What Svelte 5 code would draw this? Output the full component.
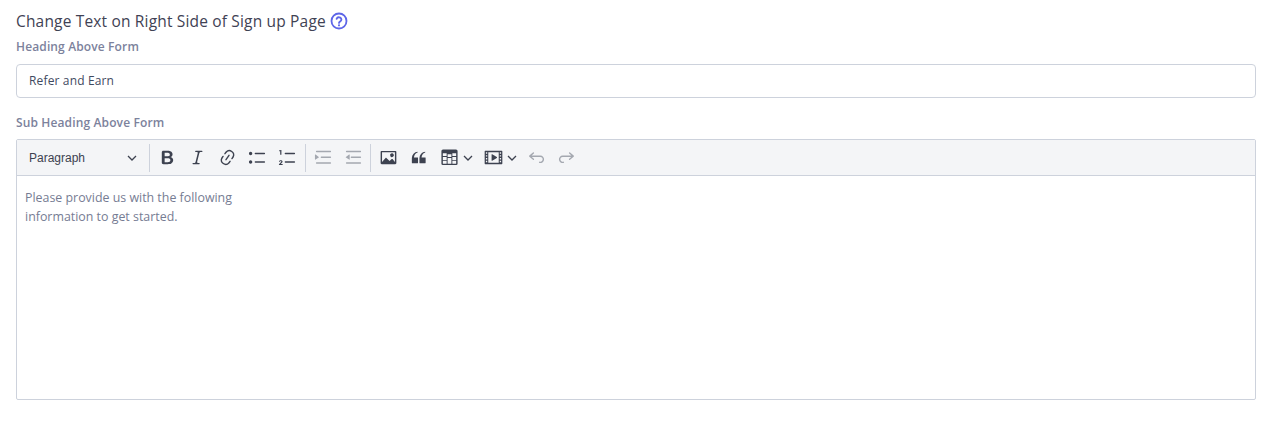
<script>
  const icons = {
    bold: 'M10.187 17H5.773c-.637 0-1.092-.138-1.364-.415-.273-.277-.409-.718-.409-1.323V4.738c0-.617.14-1.062.419-1.332.279-.27.73-.406 1.354-.406h4.68c.69 0 1.288.041 1.793.124.506.083.96.242 1.36.478.341.197.644.447.906.75a3.262 3.262 0 0 1 .808 2.162c0 1.401-.722 2.426-2.167 3.075C15.05 10.175 16 11.315 16 13.01a3.756 3.756 0 0 1-2.296 3.504 6.1 6.1 0 0 1-1.517.377c-.571.073-1.238.11-2 .11zm-.217-6.217H7v4.087h3.069c1.977 0 2.965-.69 2.965-2.072 0-.707-.256-1.22-.768-1.537-.512-.319-1.277-.478-2.296-.478zM7 5.13v3.619h2.606c.729 0 1.292-.067 1.69-.2a1.6 1.6 0 0 0 .91-.765c.165-.267.247-.566.247-.897 0-.707-.26-1.176-.778-1.409-.519-.232-1.31-.348-2.375-.348H7z',
    italic: 'm9.586 14.633.021.004c-.036.335.095.655.393.962.082.083.173.15.274.201h1.474a.6.6 0 1 1 0 1.2H5.304a.6.6 0 0 1 0-1.2h1.15c.474-.07.809-.182 1.005-.334.157-.122.291-.32.404-.597l2.416-9.55a1.053 1.053 0 0 0-.281-.823 1.12 1.12 0 0 0-.442-.296H8.15a.6.6 0 0 1 0-1.2h6.443a.6.6 0 1 1 0 1.2h-1.195c-.376.056-.65.155-.823.296-.215.175-.423.439-.623.79l-2.366 9.347z',
    link: 'm11.077 15 .991-1.416a.75.75 0 1 1 1.229.86l-1.148 1.64a.748.748 0 0 1-.217.206 5.251 5.251 0 0 1-8.503-5.955.741.741 0 0 1 .12-.274l1.147-1.639a.75.75 0 1 1 1.228.86L4.933 10.7l.006.003a3.75 3.75 0 0 0 6.132 4.294l.006.004zm5.494-5.335a.748.748 0 0 1-.12.274l-1.147 1.639a.75.75 0 1 1-1.228-.86l.86-1.23a3.75 3.75 0 0 0-6.144-4.301l-.86 1.229a.75.75 0 0 1-1.229-.86l1.148-1.64a.748.748 0 0 1 .217-.206 5.251 5.251 0 0 1 8.503 5.955zm-4.563-2.532a.75.75 0 0 1 .184 1.045l-3.155 4.505a.75.75 0 1 1-1.229-.86l3.155-4.506a.75.75 0 0 1 1.045-.184z',
    bullets: 'M7 5.75c0 .414.336.75.75.75h9.5a.75.75 0 1 0 0-1.5h-9.5a.75.75 0 0 0-.75.75zm-6 0C1 4.784 1.777 4 2.75 4c.966 0 1.75.777 1.75 1.75 0 .966-.777 1.75-1.75 1.75C1.784 7.5 1 6.723 1 5.75zm6 9c0 .414.336.75.75.75h9.5a.75.75 0 1 0 0-1.5h-9.5a.75.75 0 0 0-.75.75zm-6 0c0-.966.777-1.75 1.75-1.75.966 0 1.75.777 1.75 1.75 0 .966-.777 1.75-1.75 1.75-.966 0-1.75-.777-1.75-1.75z',
    numbers: 'M7 5.75c0 .414.336.75.75.75h9.5a.75.75 0 1 0 0-1.5h-9.5a.75.75 0 0 0-.75.75zm0 9c0 .414.336.75.75.75h9.5a.75.75 0 1 0 0-1.5h-9.5a.75.75 0 0 0-.75.75zM3.6 2v5.2H2.3V3.3H1.2v-.9c.9 0 1.4-.1 1.6-.4h.8zM1 17.9v-.9l2-1.9c.4-.4.5-.6.5-.8 0-.3-.2-.5-.6-.5-.4 0-.7.2-.7.7H1c0-1.1.8-1.7 1.9-1.7 1.2 0 1.9.6 1.9 1.5 0 .6-.3 1-.9 1.6l-1 .9h2v1H1z',
    indent: 'M2 3.75c0 .414.336.75.75.75h14.5a.75.75 0 1 0 0-1.5H2.75a.75.75 0 0 0-.75.75zm5 6c0 .414.336.75.75.75h9.5a.75.75 0 1 0 0-1.5h-9.5a.75.75 0 0 0-.75.75zM2.75 16.5h14.5a.75.75 0 1 0 0-1.5H2.75a.75.75 0 1 0 0 1.5zM1.632 6.95 5.02 9.358a.4.4 0 0 1-.013.661l-3.39 2.207A.4.4 0 0 1 1 11.892V7.275a.4.4 0 0 1 .632-.326z',
    outdent: 'M2 3.75c0 .414.336.75.75.75h14.5a.75.75 0 1 0 0-1.5H2.75a.75.75 0 0 0-.75.75zm5 6c0 .414.336.75.75.75h9.5a.75.75 0 1 0 0-1.5h-9.5a.75.75 0 0 0-.75.75zM2.75 16.5h14.5a.75.75 0 1 0 0-1.5H2.75a.75.75 0 1 0 0 1.5zM5.368 6.95 1.98 9.358a.4.4 0 0 0 .013.661l3.39 2.207A.4.4 0 0 0 6 11.892V7.275a.4.4 0 0 0-.632-.326z',
    image: 'M6.91 10.54c.26-.23.64-.21.88.03l3.36 3.14 2.23-2.06a.64.64 0 0 1 .87 0l2.52 2.97V4.5H3.2v10.12l3.71-4.08zm10.27-7.51c.6 0 1.09.47 1.09 1.05v11.84c0 .59-.49 1.06-1.09 1.06H2.79c-.6 0-1.09-.47-1.09-1.06V4.08c0-.58.49-1.05 1.1-1.05h14.38zm-5.22 5.56a1.96 1.96 0 1 1 3.4-1.96 1.96 1.96 0 0 1-3.4 1.96z',
    quote: 'M3 10.423a6.5 6.5 0 0 1 6.056-6.408l.038.67C6.448 5.423 5.354 7.663 5.22 10H9c.552 0 .5.432.5.986v4.511c0 .554-.448.503-1 .503h-5c-.552 0-.5-.449-.5-1.003v-4.574zm8 0a6.5 6.5 0 0 1 6.056-6.408l.038.67c-2.646.739-3.74 2.979-3.873 5.315H17c.552 0 .5.432.5.986v4.511c0 .554-.448.503-1 .503h-5c-.552 0-.5-.449-.5-1.003v-4.574z',
    table: 'M3 5.5v3h4v-3H3zm0 4v3h4v-3H3zm0 4v3h4v-3H3zm5 3h4v-3H8v3zm5 0h4v-3h-4v3zm4-4v-3h-4v3h4zm0-4v-3h-4v3h4zm1.5 8A1.5 1.5 0 0 1 17 18H3a1.5 1.5 0 0 1-1.5-1.5V3c.222-.863 1.068-1.5 2-1.5h13c.932 0 1.778.637 2 1.5v13.5zM12 13.5v-3H8v3h4zm0-4v-3H8v3h4z',
    media: 'M1.3 3h17.4c.4 0 .6.2.6.6v12.8c0 .4-.2.6-.6.6H1.3c-.4 0-.6-.2-.6-.6V3.6c0-.4.2-.6.6-.6zM4.5 4.5v11h11v-11h-11zM2 4.5v1.5h1.4V4.5H2zm0 3v1.5h1.4V7.5H2zm0 3V12h1.4v-1.5H2zm0 3V15h1.4v-1.5H2zm14.6-9V6H18V4.5h-1.4zm0 3V9H18V7.5h-1.4zm0 3V12H18v-1.5h-1.4zm0 3V15H18v-1.5h-1.4zM8 6.9c0-.3.3-.5.6-.3l4.9 3c.3.2.3.6 0 .8l-4.9 3c-.3.2-.6 0-.6-.3V6.9z',
    undo: 'm5.042 9.367 2.189 1.837a.75.75 0 0 1-.965 1.149l-3.788-3.18a.747.747 0 0 1-.21-.284.75.75 0 0 1 .17-.945L6.23 4.762a.75.75 0 1 1 .964 1.15L4.863 7.866h8.917A.75.75 0 0 1 14 7.9a4 4 0 1 1-1.477 7.718l.344-1.489a2.5 2.5 0 1 0 1.094-4.73l.008-.032H5.042z',
    redo: 'm14.958 9.367-2.189 1.837a.75.75 0 0 0 .965 1.149l3.788-3.18a.747.747 0 0 0 .21-.284.75.75 0 0 0-.17-.945L13.77 4.762a.75.75 0 1 0-.964 1.15l2.331 1.955H6.22A.75.75 0 0 0 6 7.9a4 4 0 1 0 1.477 7.718l-.344-1.489A2.5 2.5 0 1 1 6.039 9.4l-.008-.032h8.927z'
  };

  const groups = [
    [
      { icon: 'bold' },
      { icon: 'italic' },
      { icon: 'link' },
      { icon: 'bullets' },
      { icon: 'numbers' }
    ],
    [
      { icon: 'indent', off: true },
      { icon: 'outdent', off: true }
    ],
    [
      { icon: 'image' },
      { icon: 'quote' },
      { icon: 'table', menu: true },
      { icon: 'media', menu: true },
      { icon: 'undo', off: true },
      { icon: 'redo', off: true }
    ]
  ];
</script>

<div class="page">
  <h4 class="title">
    Change Text on Right Side of Sign up Page
    <svg class="help" viewBox="0 0 24 24" width="18" height="18" fill="none" stroke="currentColor" stroke-width="2.4">
      <circle cx="12" cy="12" r="10" />
      <path d="M8.8 9.2a3.3 3.3 0 0 1 6.4 1c0 2.2-3.2 2.6-3.2 4.3" stroke-linecap="round" />
      <circle cx="12" cy="17.8" r="1.4" fill="currentColor" stroke="none" />
    </svg>
  </h4>

  <label class="label" for="heading">Heading Above Form</label>
  <input id="heading" class="input" type="text" value="Refer and Earn" />

  <span class="label second">Sub Heading Above Form</span>
  <div class="editor">
    <div class="toolbar">
      <button class="dropdown">
        <span>Paragraph</span>
        <svg class="chevron" viewBox="0 0 10 10" width="10" height="10"><path d="M1 3l4 4 4-4" /></svg>
      </button>
      {#each groups as group}
        <span class="sep"></span>
        {#each group as item}
          <button class="tool" class:off={item.off} class:menu={item.menu}>
            <svg viewBox="0 0 20 20" width="19" height="19" fill="currentColor"><path d={icons[item.icon]} fill-rule={item.icon === 'media' ? 'evenodd' : 'nonzero'} /></svg>
            {#if item.menu}
              <svg class="chevron" viewBox="0 0 10 10" width="10" height="10"><path d="M1 3l4 4 4-4" /></svg>
            {/if}
          </button>
        {/each}
      {/each}
    </div>
    <div class="content">
      <p>Please provide us with the following<br />information to get started.</p>
    </div>
  </div>
</div>

<style>
  :global(body) {
    background: #fff;
  }

  .page {
    padding: 11px 31px 0 16px;
    display: flex;
    flex-direction: column;
    font-family: 'Open Sans', sans-serif;
  }

  .title {
    margin: 0;
    height: 20px;
    display: flex;
    align-items: center;
    gap: 4px;
    font-size: 15.5px;
    letter-spacing: 0.17px;
    line-height: 20px;
    font-weight: 400;
    color: #3f4254;
  }

  .help {
    color: #5d65e8;
  }

  .label {
    display: block;
    margin-top: 7px;
    height: 26px;
    font-size: 12px;
    letter-spacing: 0.13px;
    line-height: 18px;
    font-weight: 600;
    color: #7c829c;
  }

  .label.second {
    margin-top: 16px;
    height: 25px;
  }

  .input {
    box-sizing: border-box;
    width: 100%;
    height: 34px;
    padding: 0 12px 2px;
    border: 1px solid #cdd2dc;
    border-radius: 4px;
    background: #fff;
    font: inherit;
    font-size: 12px;
    letter-spacing: 0.15px;
    color: #3f4a5f;
    outline: none;
  }

  .editor {
    box-sizing: border-box;
    height: 261px;
    border: 1px solid #cdd2dc;
    border-radius: 2px;
    display: flex;
    flex-direction: column;
  }

  .toolbar {
    height: 36px;
    flex: none;
    box-sizing: border-box;
    display: flex;
    align-items: center;
    padding: 0 0 0 3px;
    background: #f4f5f7;
    border-bottom: 1px solid #cdd2dc;
  }

  button {
    border: 0;
    background: none;
    padding: 0;
    display: flex;
    align-items: center;
    color: #3d4250;
  }

  .dropdown {
    width: 127px;
    padding: 0 10px 0 9px;
    box-sizing: border-box;
    justify-content: space-between;
    font-family: 'Liberation Sans', sans-serif;
    font-size: 12px;
  }

  .chevron {
    fill: none;
    stroke: currentColor;
    stroke-width: 1.3;
  }

  .sep {
    width: 1px;
    height: 28px;
    background: #cdd2dc;
    margin: 0 2px;
  }

  .tool {
    width: 30.2px;
    height: 28px;
    justify-content: center;
    flex: none;
  }

  .tool.menu {
    width: 44px;
    padding-left: 6px;
    box-sizing: border-box;
    justify-content: flex-start;
    gap: 4px;
  }

  .tool.off {
    color: #a4a8b0;
  }

  .content {
    flex: 1;
    padding: 12px 8px;
  }

  .content p {
    margin: 0;
    font-size: 12.4px;
    line-height: 19px;
    color: #767c93;
  }
</style>
